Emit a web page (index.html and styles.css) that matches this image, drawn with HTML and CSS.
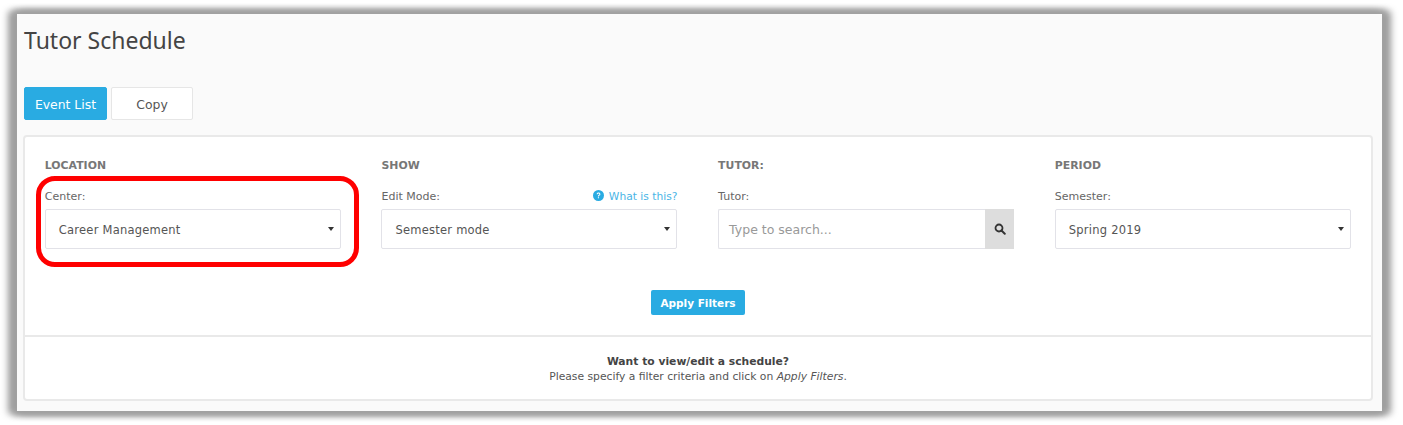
FILE: index.html
```html
<!DOCTYPE html>
<html lang="en">
<head>
<meta charset="UTF-8">
<title>Tutor Schedule</title>
<link rel="stylesheet" href="styles.css">
</head>
<body>
<div class="screen">
    <h1 class="page-title">Tutor Schedule</h1>

    <!-- Tabs -->
    <div class="tabs">
        <a class="tab tab-active">Event List</a>
        <a class="tab">Copy</a>
    </div>

    <!-- Filter card -->
    <div class="card">
        <div class="filters">
            <div class="filter">
                <div class="filter-title">LOCATION</div>
                <div class="field-label"><span>Center:</span></div>
                <div class="select"><span>Career Management</span><i class="caret"></i></div>
            </div>
            <div class="filter">
                <div class="filter-title">SHOW</div>
                <div class="field-label">
                    <span>Edit Mode:</span>
                    <a class="help">
                        <svg class="help-icon" viewBox="0 0 24 24"><circle cx="12" cy="12" r="12" fill="#29abe2"/><path d="M8 9.4c0-2.4 1.8-3.9 4.1-3.9 2.2 0 4 1.4 4 3.5 0 1.7-1 2.5-2.1 3.2-.9.6-1.1.9-1.1 1.8h-2.3c0-1.7.5-2.4 1.7-3.2.9-.6 1.5-1 1.5-1.8 0-.8-.7-1.4-1.7-1.4-1.1 0-1.7.7-1.8 1.8H8zM10.6 15.6h2.5V18h-2.5z" fill="#fff"/></svg>
                        What is this?
                    </a>
                </div>
                <div class="select"><span>Semester mode</span><i class="caret"></i></div>
            </div>
            <div class="filter">
                <div class="filter-title">TUTOR:</div>
                <div class="field-label"><span>Tutor:</span></div>
                <div class="search">
                    <div class="search-input">Type to search...</div>
                    <div class="search-btn">
                        <svg class="search-icon" viewBox="0 0 24 24"><circle cx="10" cy="10" r="7" fill="none" stroke="#333" stroke-width="3.6"/><path d="M15 15l6.5 6.5" stroke="#333" stroke-width="4" stroke-linecap="round"/></svg>
                    </div>
                </div>
            </div>
            <div class="filter">
                <div class="filter-title">PERIOD</div>
                <div class="field-label"><span>Semester:</span></div>
                <div class="select"><span>Spring 2019</span><i class="caret"></i></div>
            </div>
        </div>

        <div class="actions">
            <button class="apply-btn">Apply Filters</button>
        </div>

        <div class="notice">
            <strong>Want to view/edit a schedule?</strong>
            <p>Please specify a filter criteria and click on <em>Apply Filters</em>.</p>
        </div>
    </div>

    <!-- Red annotation around the Center field -->
    <div class="highlight"></div>
</div>
</body>
</html>
```

FILE: styles.css
```css
html, body {
    margin: 0;
    padding: 0;
    background-color: #fff;
}

body {
    height: 425px;
    overflow: hidden;
    padding-top: 14px;
    box-sizing: border-box;
    font-family: 'DejaVu Sans', Verdana, sans-serif;
    color: #555;
}

.screen {
    position: relative;
    width: 1365px;
    height: 397px;
    margin-left: 17px;
    padding: 0 6px;
    box-sizing: border-box;
    background-color: #fafafa;
    box-shadow: 0 0 6px 4px #a0a0a0, -6px 0 7px 3px #a0a0a0, 6px 0 7px 3px #a0a0a0;
}

.page-title {
    margin: 0 0 0 1px;
    padding-top: 10px;
    height: 73px;
    box-sizing: border-box;
    font-family: 'Noto Sans', sans-serif;
    font-size: 23px;
    font-weight: 400;
    line-height: 32px;
    color: #444;
}

.tabs {
    display: flex;
    gap: 4px;
    margin: 0 0 15px 1px;
}

.tab {
    width: 82px;
    height: 33px;
    box-sizing: border-box;
    border: 1px solid #e6e6e6;
    border-radius: 2px;
    background-color: #fff;
    font-size: 12.4px;
    line-height: 33px;
    text-align: center;
    color: #555;
}

.tab-active {
    width: 83px;
    border-color: #29abe2;
    background-color: #29abe2;
    color: #fff;
}

.card {
    width: 1350px;
    height: 266px;
    box-sizing: border-box;
    border: 2px solid #e9e9e9;
    border-radius: 4px;
    background-color: #fff;
}

.filters {
    display: grid;
    grid-template-columns: repeat(4, 296px);
    column-gap: 40.67px;
    padding: 22px 20px 0 19.8px;
}

.filter-title {
    font-size: 10.9px;
    font-weight: 700;
    line-height: 14px;
    color: #777;
}

.field-label {
    display: flex;
    justify-content: space-between;
    margin-top: 17px;
    margin-bottom: 5px;
    font-size: 11px;
    line-height: 14px;
    color: #666;
}

.help {
    font-size: 10.7px;
    color: #4ab5e6;
}

.help-icon {
    width: 11px;
    height: 11px;
    margin-right: 1px;
    vertical-align: -1px;
}

.select {
    display: flex;
    align-items: center;
    justify-content: space-between;
    height: 40px;
    box-sizing: border-box;
    padding: 2px 6px 0 13px;
    border: 1px solid #e2e2e8;
    border-radius: 2px;
    font-size: 11.5px;
    letter-spacing: 0.02em;
    color: #555;
}

.caret {
    width: 0;
    height: 0;
    margin-bottom: 2px;
    border-left: 3px solid transparent;
    border-right: 3px solid transparent;
    border-top: 4px solid #333;
}

.search {
    display: flex;
    height: 40px;
}

.search-input {
    flex: 1;
    box-sizing: border-box;
    padding-left: 10px;
    border: 1px solid #e2e2e8;
    border-right: none;
    border-radius: 2px 0 0 2px;
    font-size: 12.5px;
    line-height: 40px;
    color: #999;
}

.search-btn {
    display: flex;
    align-items: center;
    justify-content: center;
    width: 29px;
    background-color: #ddd;
}

.search-icon {
    width: 12px;
    height: 12px;
}

.actions {
    display: flex;
    justify-content: center;
    height: 45px;
    margin-top: 41px;
    border-bottom: 2px solid #e9e9e9;
}

.apply-btn {
    width: 94px;
    height: 25px;
    padding: 0;
    border: none;
    border-radius: 2px;
    background-color: #29abe2;
    font-family: inherit;
    font-size: 10.5px;
    font-weight: 700;
    color: #fff;
}

.notice {
    padding-top: 17px;
    text-align: center;
    font-size: 10.75px;
    line-height: 15px;
    color: #555;
}

.notice strong {
    color: #444;
}

.notice p {
    margin: 0;
}

.highlight {
    position: absolute;
    left: 19px;
    top: 162px;
    width: 323px;
    height: 91px;
    box-sizing: border-box;
    border: 5px solid #f00;
    border-radius: 19px;
}
```
